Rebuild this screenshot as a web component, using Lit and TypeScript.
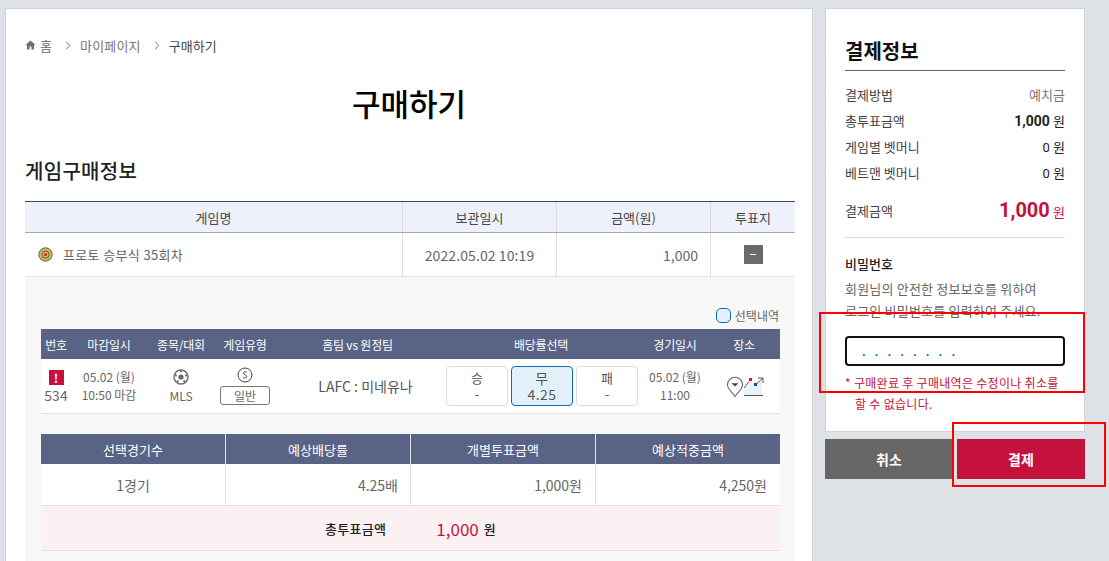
import { LitElement, html, css } from "lit";
import { customElement } from "lit/decorators.js";

@customElement("app-root")
export class AppRoot extends LitElement {
  static styles = css`
    :host {
      display: block;
      position: relative;
      width: 1109px;
      height: 561px;
      overflow: hidden;
      background: #dee1e6;
      font-family: "Noto Sans CJK KR", "Noto Sans", sans-serif;
      font-size: 13px;
      color: #555;
    }
    * { box-sizing: border-box; }
    .page { display: flex; gap: 12px; padding: 8px 0 0 5px; align-items: flex-start; }
    .main {
      width: 808px; height: 600px; flex: none; background: #fff;
      border: 1px solid #d0d3d8; padding: 0 17px 0 19px;
    }
    .crumbs { display: flex; align-items: center; height: 18px; margin-top: 27px; color: #666; font-size: 13px; }
    .crumbs svg { flex: none; }
    .crumbs .home { margin-right: 4px; }
    .crumbs .sep { margin: 0 9px 0 13px; }
    .crumbs .mid { color: #777; letter-spacing: 0.2px; }
    .crumbs .cur { color: #444; }
    h1 { margin: 27px 0 0; padding-right: 2px; height: 44px; line-height: 44px; text-align: center; font-size: 31px; font-weight: 500; color: #000; }
    h2 { margin: 31px 0 0; height: 30px; line-height: 30px; font-size: 20px; letter-spacing: 0.3px; font-weight: 500; color: #222; }
    .tbl { margin-top: 15px; border-top: 1px solid #3b4566; }
    .gr { display: grid; grid-template-columns: 377px 154px 154px 85px; }
    .gh { height: 31px; background: #edf1fa; border-bottom: 1px solid #a8a8a8; color: #444; }
    .gh > div { display: flex; align-items: center; justify-content: center; border-left: 1px solid #dcdcdc; }
    .gh > div:first-child { border-left: 0; }
    .gb { height: 44px; border-bottom: 1px solid #e4e4e4; font-size: 14px; color: #666; }
    .gb > div { display: flex; align-items: center; border-left: 1px solid #e0e0e0; }
    .gb > div:first-child { border-left: 0; padding-left: 13px; gap: 10px; font-size: 13px; letter-spacing: 0.35px; }
    .gb .c { justify-content: center; letter-spacing: 0.1px; }
    .gb .r { justify-content: flex-end; padding-right: 12px; }
    .minus { width: 19px; height: 19px; background: #6b6b6b; display: flex; align-items: center; justify-content: center; }
    .minus i { display: block; width: 6px; height: 1px; background: #fff; }
    .panel { background: #f8f8f8; padding: 30px 15px 0 16px; height: 300px; }
    .pick { display: flex; justify-content: flex-end; align-items: center; gap: 4px; height: 16px; padding-right: 1px; font-size: 12px; color: #666; margin-bottom: 6px; }
    .box { width: 15px; height: 15px; border-radius: 5px; border: 1px solid #0b6cb3; background: #e4f1fb; }
    .dt { background: #fff; border-bottom: 1px solid #e2e2e2; }
    .dgrid { display: grid; grid-template-columns: 30px 76px 68px 60px 165px 202px 66px 72px; }
    .dh { height: 30px; background: #586386; color: #fff; font-size: 12px; letter-spacing: -0.2px; }
    .dh > div { display: flex; align-items: center; justify-content: center; }
    .db { height: 54px; font-size: 12px; color: #666; }
    .db > div { display: flex; flex-direction: column; align-items: center; justify-content: center; }
    .db > .no { font-size: 14px; line-height: 18px; padding-top: 2px; }
    .flag { width: 15px; height: 15px; background: #c4123d; color: #fff; font-weight: 700; font-size: 12px; line-height: 15px; text-align: center; margin-bottom: 1px; }
    .two { line-height: 18px; }
    .sport { line-height: 16px; gap: 3px; }
    .db > .type { gap: 3px; }
    .tag { width: 50px; height: 19px; border: 1px solid #777; border-radius: 3px; line-height: 17px; text-align: center; color: #666; }
    .db > .team { font-size: 14px; color: #555; padding-left: 16px; }
    .db > .odds { flex-direction: row; gap: 3px; padding-left: 2px; }
    .odd { width: 62px; height: 40px; border: 1px solid #dcdcdc; border-radius: 4px; background: #fff; text-align: center; line-height: 16px; font-size: 13px; color: #555; padding-top: 3px; }
    .odd b { display: block; font-weight: 400; }
    .odd.on { background: #e4f1fb; border-color: #0b6cb3; font-size: 14px; letter-spacing: 0.4px; }
    .db > .place { flex-direction: row; gap: 0; padding: 2px 0 0 2px; }
    .sum { margin-top: 20px; }
    .sgrid { display: grid; grid-template-columns: 184px 185px 185px 185px; }
    .sh { height: 30px; background: #586386; color: #fff; }
    .sh > div { display: flex; align-items: center; justify-content: center; border-left: 1px solid #e6e6e6; }
    .sh > div:first-child, .sb > div:first-child { border-left: 0; }
    .sb { height: 42px; background: #fff; border-bottom: 1px solid #e2e2e2; color: #666; font-size: 14px; }
    .sb > div { display: flex; align-items: center; justify-content: flex-end; padding-right: 13px; border-left: 1px solid #e0e0e0; }
    .sb > div:first-child { justify-content: center; padding-right: 0; }
    .sb > div:nth-child(2) { padding-right: 12px; }
    .tot { height: 45px; background: #fbf1f3; border-bottom: 1px solid #e2e2e2; display: flex; align-items: center; padding-left: 284px; color: #222; font-weight: 500; font-size: 13px; }
    .tot .lab { letter-spacing: 0.3px; }
    .tot em { font-style: normal; font-weight: 400; font-size: 17px; color: #c4123d; margin: 0 5px 0 50px; }
    .side { width: 260px; flex: none; display: flex; flex-direction: column; gap: 7px; }
    .card { height: 424px; background: #fff; border: 1px solid #d0d3d8; padding: 0 19px; }
    .card h3 { margin: 27px 0 0; height: 35px; line-height: 30px; font-size: 20px; font-weight: 700; color: #111; border-bottom: 1px solid #666; }
    .rows { padding-top: 10px; }
    .row { display: flex; justify-content: space-between; align-items: center; height: 26px; color: #444; }
    .row .v { color: #222; font-family: Roboto, "Noto Sans CJK KR", sans-serif; }
    .row .v b { font-weight: 700; font-size: 14px; }
    .row .g { color: #777; }
    .row.pay { height: 26px; margin-top: 12px; }
    .row.pay b { font-size: 20px; color: #c4123d; }
    .row.pay .v { color: #c4123d; }
    .line { height: 1px; background: #ddd; margin-top: 14px; }
    .lbl { margin-top: 17px; height: 18px; line-height: 18px; color: #222; font-weight: 500; }
    .help { margin-top: 5px; line-height: 22px; color: #666; letter-spacing: 0.2px; }
    .pw {
      display: block; width: 220px; height: 30px; margin-top: 14px; border: 2px solid #111; border-radius: 4px;
      background: #fff; padding: 0 0 0 15px; font: 700 13px Roboto, sans-serif; letter-spacing: 9px; color: #0b5ea6; outline: none;
    }
    .note { margin: 6px 0 0; padding-left: 10px; text-indent: -10px; font-size: 12px; line-height: 21px; letter-spacing: 0.3px; color: #c4123d; }
    .btns { display: flex; gap: 4px; }
    .btn { flex: 1; height: 40px; display: flex; align-items: center; justify-content: center; color: #fff; font-size: 14px; font-weight: 700; }
    .gray { background: #666; }
    .red { background: #c4123d; }
    .mark { position: absolute; border: 2px solid #f00; pointer-events: none; }
    .m1 { left: 819px; top: 312px; width: 266px; height: 81px; }
    .m2 { left: 952px; top: 422px; width: 154px; height: 65px; }
  `;

  render() {
    return html`
      <div class="page">
        <section class="main">
          <nav class="crumbs">
            <svg class="home" width="11" height="10" viewBox="0 0 11 10"><path d="M5.5 0.5 0.5 5H2v4.5h2.6V6.5h1.8v3H9V5h1.5z" fill="#6b7078"/></svg>
            <span>홈</span>
            <svg class="sep" width="6" height="9" viewBox="0 0 6 9"><path d="M1 .8 5 4.5 1 8.2" fill="none" stroke="#777"/></svg>
            <span class="mid">마이페이지</span>
            <svg class="sep" width="6" height="9" viewBox="0 0 6 9"><path d="M1 .8 5 4.5 1 8.2" fill="none" stroke="#777"/></svg>
            <span class="cur">구매하기</span>
          </nav>
          <h1>구매하기</h1>
          <h2>게임구매정보</h2>
          <div class="tbl">
            <div class="gr gh"><div>게임명</div><div>보관일시</div><div>금액(원)</div><div>투표지</div></div>
            <div class="gr gb">
              <div>
                <svg width="15" height="15" viewBox="0 0 15 15"><circle cx="7.5" cy="7.5" r="7.2" fill="#6f7480"/><circle cx="7.5" cy="7.5" r="6" fill="#f2bb2a"/><circle cx="7.5" cy="7.5" r="4" fill="#3f63a8"/><circle cx="7.5" cy="7.5" r="3" fill="#eeb432"/><circle cx="7.5" cy="7.5" r="1.5" fill="#d8202c"/></svg>
                <span>프로토 승부식 35회차</span>
              </div>
              <div class="c">2022.05.02 10:19</div>
              <div class="r">1,000</div>
              <div class="c"><span class="minus"><i></i></span></div>
            </div>
          </div>
          <div class="panel">
            <div class="pick"><span class="box"></span><span>선택내역</span></div>
            <div class="dt">
              <div class="dgrid dh">
                <div>번호</div><div>마감일시</div><div>종목/대회</div><div>게임유형</div><div>홈팀 vs 원정팀</div><div>배당률선택</div><div>경기일시</div><div>장소</div>
              </div>
              <div class="dgrid db">
                <div class="no"><span class="flag">!</span><span>534</span></div>
                <div class="two"><span>05.02 (월)</span><span>10:50 마감</span></div>
                <div class="sport">
                  <svg width="16" height="16" viewBox="0 0 16 16"><circle cx="8" cy="8" r="7" fill="#fff" stroke="#666" stroke-width="1.3"/><circle cx="8" cy="8" r="2.6" fill="#666"/><path d="M8 1.5v1.8M2 6.2l1.7.7M14 6.2l-1.7.7M4.2 13l1.2-1.6M11.8 13l-1.2-1.6" stroke="#666" stroke-width="1.8"/></svg>
                  <span>MLS</span>
                </div>
                <div class="type">
                  <svg width="16" height="16" viewBox="0 0 16 16"><circle cx="8" cy="8" r="7" fill="#fff" stroke="#444"/><path d="M10 5.4C9.4 4.7 6.6 4.4 6.3 6.1 6 7.8 10 7.9 9.8 9.8 9.6 11.4 6.7 11.3 6 10.5" fill="none" stroke="#555"/></svg>
                  <span class="tag">일반</span>
                </div>
                <div class="team">LAFC : 미네유나</div>
                <div class="odds">
                  <div class="odd"><b>승</b><b>-</b></div>
                  <div class="odd on"><b>무</b><b>4.25</b></div>
                  <div class="odd"><b>패</b><b>-</b></div>
                </div>
                <div class="two"><span>05.02 (월)</span><span>11:00</span></div>
                <div class="place">
                  <svg width="18" height="22" viewBox="0 0 18 22"><path d="M9 20.5C6 16 1.5 13 1.5 8.7a7.5 7.5 0 0 1 15 0C16.5 13 12 16 9 20.5z" fill="#fff" stroke="#666" stroke-width="1.1"/><path d="M5.5 7.2h7L9 10.6z" fill="#444"/></svg>
                  <svg width="20" height="21" viewBox="0 0 20 21"><path d="M0 11 6 4l5 5 7-7v16H0z" fill="#eaf3fb"/><path d="M0 11 5 4.5M13 6.5 19 1M14 1h5v5" fill="none" stroke="#555"/><path d="M0 18.5h19" stroke="#555"/><rect x="5" y="1" width="3" height="3" fill="#e3122d"/><rect x="10" y="6" width="3" height="3" fill="#0b4fb5"/></svg>
                </div>
              </div>
            </div>
            <div class="sum">
              <div class="sgrid sh"><div>선택경기수</div><div>예상배당률</div><div>개별투표금액</div><div>예상적중금액</div></div>
              <div class="sgrid sb"><div>1경기</div><div>4.25배</div><div>1,000원</div><div>4,250원</div></div>
              <div class="tot"><span class="lab">총투표금액</span><em>1,000</em><span>원</span></div>
            </div>
          </div>
        </section>
        <aside class="side">
          <div class="card">
            <h3>결제정보</h3>
            <div class="rows">
              <div class="row"><span>결제방법</span><span class="g">예치금</span></div>
              <div class="row"><span>총투표금액</span><span class="v"><b>1,000</b> 원</span></div>
              <div class="row"><span>게임별 벳머니</span><span class="v">0 원</span></div>
              <div class="row"><span>베트맨 벳머니</span><span class="v">0 원</span></div>
              <div class="row pay"><span>결제금액</span><span class="v"><b>1,000</b> 원</span></div>
            </div>
            <div class="line"></div>
            <div class="lbl">비밀번호</div>
            <div class="help">회원님의 안전한 정보보호를 위하여<br />로그인 비밀번호를 입력하여 주세요.</div>
            <input class="pw" type="text" value="........" aria-label="비밀번호" />
            <p class="note">* 구매완료 후 구매내역은 수정이나 취소를 할 수 없습니다.</p>
          </div>
          <div class="btns"><div class="btn gray">취소</div><div class="btn red">결제</div></div>
        </aside>
      </div>
      <div class="mark m1"></div>
      <div class="mark m2"></div>
    `;
  }
}
